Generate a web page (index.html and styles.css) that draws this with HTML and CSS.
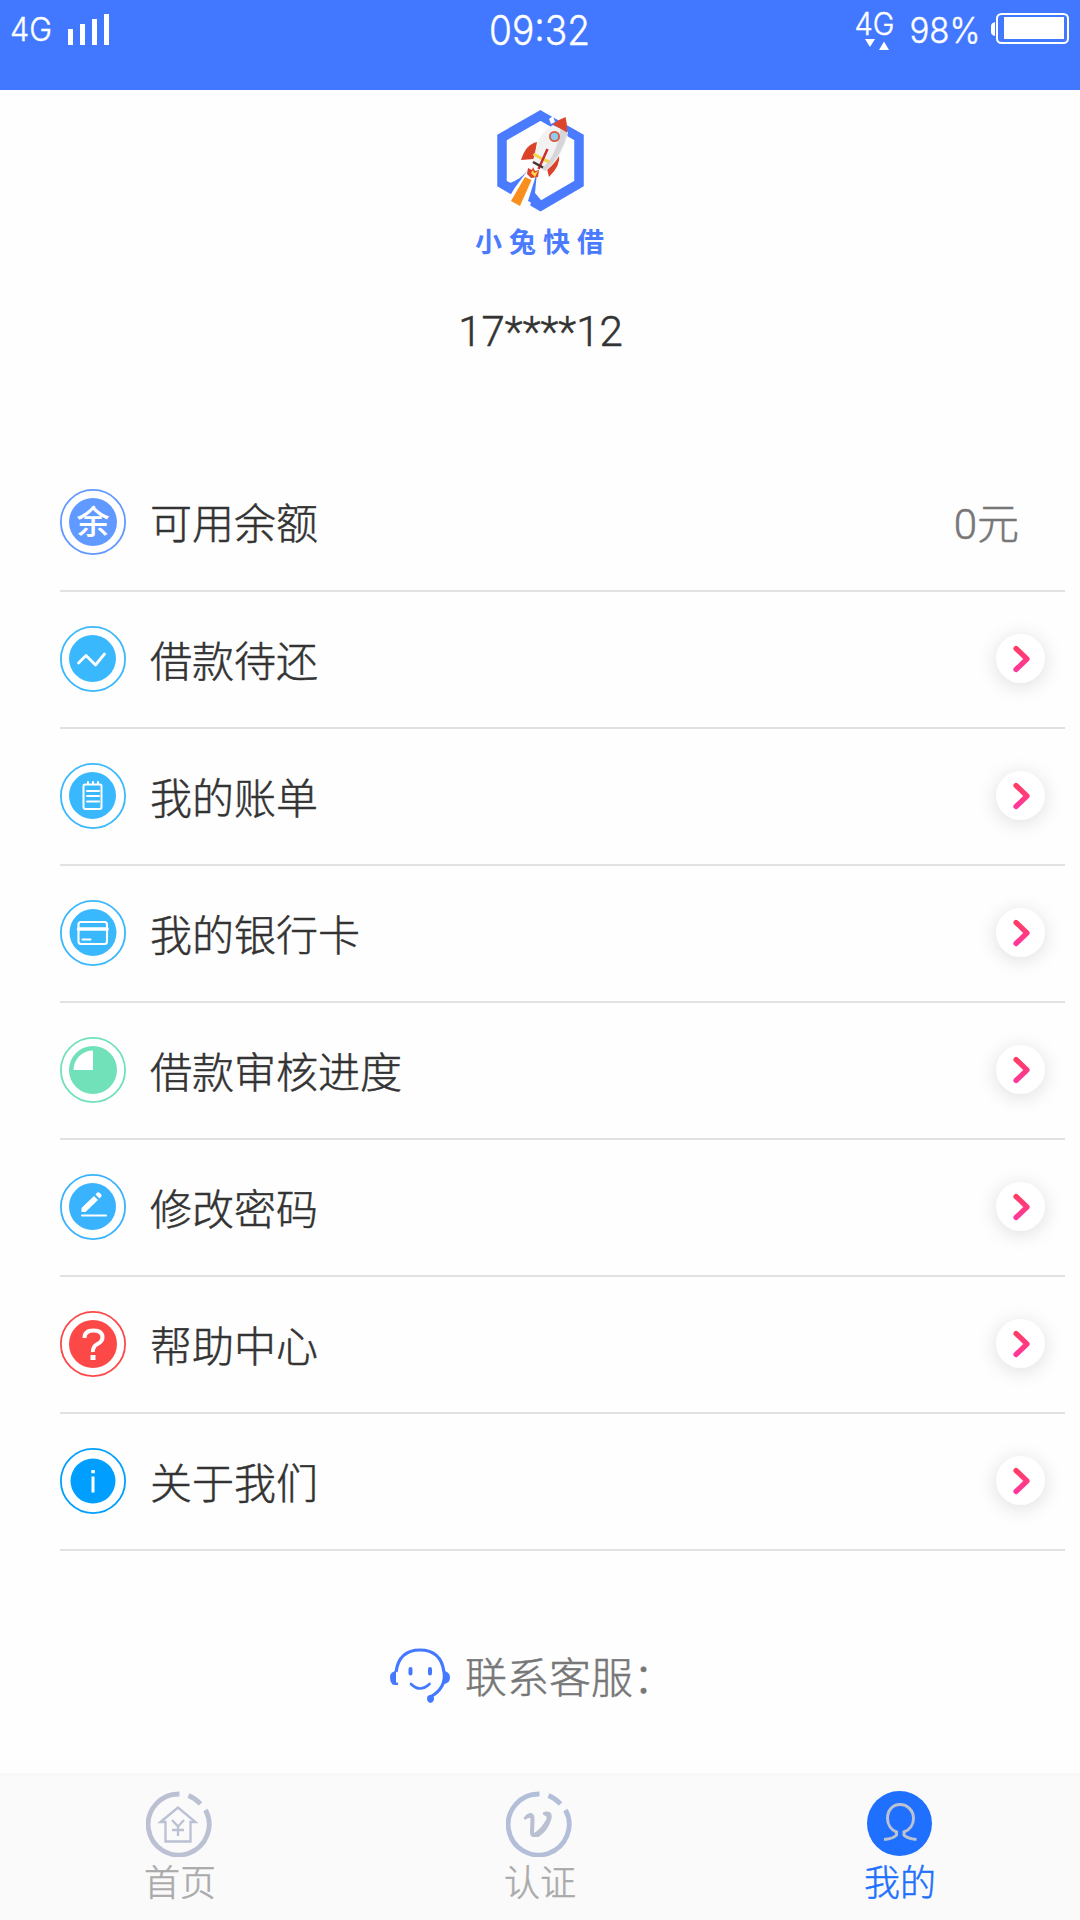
FILE: index.html
```html
<!DOCTYPE html>
<html lang="zh-CN">
<head>
<meta charset="utf-8">
<title>我的</title>
<link rel="stylesheet" href="styles.css">
</head>
<body>
<header class="status">
  <svg class="status-side" width="360" height="90" viewBox="0 0 360 90">
    <text x="10" y="40.5" font-size="33" textLength="42" lengthAdjust="spacingAndGlyphs">4G</text>
    <path d="M68 29h5v16h-5zM80 24h5v21h-5zM92 19h5v26h-5zM104 14h5v31h-5z"/>
  </svg>
  <svg class="status-side" width="360" height="90" viewBox="360 0 360 90">
    <text x="489" y="45" font-size="41" textLength="101" lengthAdjust="spacingAndGlyphs">09:32</text>
  </svg>
  <svg class="status-side" width="360" height="90" viewBox="720 0 360 90">
    <text x="854.500" y="34.500" font-size="31" textLength="40" lengthAdjust="spacingAndGlyphs">4G</text>
    <path d="M865 39h10l-5 8zM879 50h10l-5-8.500z"/>
    <text x="909.500" y="42.500" font-size="35" textLength="71" lengthAdjust="spacingAndGlyphs">98%</text>
    <path d="M995 22v14q-4-1-4-4v-6q0-3 4-4z"/>
    <rect x="997" y="14" width="71" height="29" rx="4.500" fill="none" stroke="#fff" stroke-width="2"/>
    <rect x="1004" y="17" width="60" height="22"/>
  </svg>
</header>

<section class="profile">
  <svg class="logo" width="88" height="102" viewBox="497 110 88 102">
    <path d="M540.500 115.500L579 137.500v46L540.500 206 502 183.500v-46z" fill="none" stroke="#4a7bff" stroke-width="9.500"/>
    <path d="M523 172l15 4-8 30-20-10z" fill="#fefefe"/>
    <path d="M505 181l5 2q11-4 18-13l-17 23-6-4zM537 172l-2 21 6 7v8l-13-7z" fill="#4a7bff"/>
    <path d="M549 119l4-3 2 6-4 2z" fill="#fefefe"/>
    <path d="M525 177l6.500 3-11.500 26-9-5z" fill="#f98f1d"/>
    <path d="M537 142q-11 2-16 18l13-1zM559 155q2 10-10 22l-3-12z" fill="#db4329"/>
    <path d="M553 125q-11 6-15 17l-6 22 14 7q12-10 16-21 5-9 6-18z" fill="#f2f2f3"/>
    <path d="M567.500 132q-5 23-22 39l-4-2q16-14 19-41z" fill="#d5d5da"/>
    <path d="M552.500 124.500q6-5 13-7.500 2 7 1.500 15.500-8-5-14.500-8z" fill="#dc4529"/>
    <circle cx="554.500" cy="136.500" r="4.600" fill="#8ecbef" stroke="#d9583e" stroke-width="1.800"/>
    <path d="M533.500 154q8 5 16 8" stroke="#f1d34e" stroke-width="3" fill="none"/>
    <path d="M547.500 149l-9 20" stroke="#ca302b" stroke-width="2.500"/>
    <path d="M533 162l10 5.500" stroke="#4b302e" stroke-width="2.500"/>
    <path d="M528 168l4 2 1-3 2 4 4-1-1 7-7 1-4-4z" fill="#d9422b"/>
    <path d="M531 173l2-3 1 3 4-2-3 6z" fill="#ffd84b"/>
  </svg>
  <div class="brand">小兔快借</div>
  <div class="phone">17****12</div>
</section>

<main class="menu">
  <div class="row">
    <svg class="icon" viewBox="0 0 66 66"><circle class="ring" cx="33" cy="33" r="32.100" stroke="#6099ff"/><circle cx="33" cy="33" r="24" fill="#6099ff"/><text class="glyph" x="33" y="45" text-anchor="middle">余</text></svg>
    <span class="label">可用余额</span><span class="amount">0元</span>
  </div>
  <div class="row">
    <svg class="icon" viewBox="0 0 66 66"><circle class="ring" cx="33" cy="33" r="32.100" stroke="#39b8fd"/><circle cx="32.500" cy="32.500" r="23.500" fill="#39b8fd"/><path class="line" d="M18.500 37l7.500-7.500 9.500 9.500 9-11" stroke-width="2.800"/></svg>
    <span class="label">借款待还</span><span class="go"><svg viewBox="0 0 49 49"><use href="#chev"/></svg></span>
  </div>
  <div class="row">
    <svg class="icon" viewBox="0 0 66 66"><circle class="ring" cx="33" cy="33" r="32.100" stroke="#39b8fd"/><circle cx="32.500" cy="32.500" r="23.500" fill="#39b8fd"/><path class="line" d="M25 21.500h15q1.500 0 1.500 1.500v21q0 2-2 2h-14q-2 0-2-2V23q0-1.500 1.500-1.500zM28 19v2M33 19v2M38 19v2M27 28h12M27 33h12M27 38.500h12" stroke-width="2"/></svg>
    <span class="label">我的账单</span><span class="go"><svg viewBox="0 0 49 49"><use href="#chev"/></svg></span>
  </div>
  <div class="row">
    <svg class="icon" viewBox="0 0 66 66"><circle class="ring" cx="33" cy="33" r="32.100" stroke="#39b8fd"/><circle cx="33" cy="32.500" r="23.500" fill="#39b8fd"/><rect class="line" x="18.500" y="22" width="28.500" height="22" rx="2.500" stroke-width="2.100"/><path class="line" d="M18.500 29h28.500" stroke-width="3.600"/><path class="line" d="M22.500 39.500h8" stroke-width="2"/></svg>
    <span class="label">我的银行卡</span><span class="go"><svg viewBox="0 0 49 49"><use href="#chev"/></svg></span>
  </div>
  <div class="row">
    <svg class="icon" viewBox="0 0 66 66"><circle class="ring" cx="33" cy="33" r="32.100" stroke="#70e1b9"/><circle cx="33" cy="33" r="24" fill="#70e1b9"/><path d="M33 33V13.500A19.500 19.500 0 0 0 13.500 33z" fill="#fff"/></svg>
    <span class="label">借款审核进度</span><span class="go"><svg viewBox="0 0 49 49"><use href="#chev"/></svg></span>
  </div>
  <div class="row">
    <svg class="icon" viewBox="0 0 66 66"><circle class="ring" cx="33" cy="33" r="32.100" stroke="#39b3fd"/><circle cx="32.500" cy="32.500" r="23.500" fill="#39b3fd"/><path d="M21.500 38v-4l12.500-12 4 4-12.500 12zM35.500 20.500l1.500-1.800q1.500-1 2.800.3l1.200 1.200q1.200 1.300.2 2.500L39.500 24.500z" fill="#fff"/><path class="line" d="M22 41.500h24" stroke-width="2"/></svg>
    <span class="label">修改密码</span><span class="go"><svg viewBox="0 0 49 49"><use href="#chev"/></svg></span>
  </div>
  <div class="row">
    <svg class="icon" viewBox="0 0 66 66"><circle class="ring" cx="33" cy="33" r="32.100" stroke="#fd4848"/><circle cx="33" cy="33" r="24" fill="#fd4848"/><path class="line butt" d="M24.500 27q0-7.500 9-7.500t9 7q0 4-5 6.500-5 2.500-4.500 8" stroke-width="4"/><rect x="30.500" y="44" width="5" height="5" fill="#fff"/></svg>
    <span class="label">帮助中心</span><span class="go"><svg viewBox="0 0 49 49"><use href="#chev"/></svg></span>
  </div>
  <div class="row">
    <svg class="icon" viewBox="0 0 66 66"><circle class="ring" cx="33" cy="33" r="32.100" stroke="#009fff"/><circle cx="33" cy="33" r="22.500" fill="#009fff"/><path d="M31.500 28.500h3v16h-3zM31.300 22h3.500v3.300h-3.500z" fill="#fff"/></svg>
    <span class="label">关于我们</span><span class="go"><svg viewBox="0 0 49 49"><use href="#chev"/></svg></span>
  </div>
</main>

<section class="contact">
  <svg width="60" height="56" viewBox="0 0 60 56">
    <path d="M6 24Q9 2 30 2t24 22c2 11-4 20-14 25" fill="none" stroke="#4478ff" stroke-width="3.200"/>
    <path d="M6 23v14q-6 0-6-8 0-5 6-6zM54 23v13q6-1 6-6.500T54 23zM37 51q0-4 3.500-4t3.500 3.500q0 3.500-3.500 4.500-3-.5-3.500-4z" fill="#4478ff"/>
    <path d="M2 35q3 .5 6 1" stroke="#4478ff" stroke-width="2.500"/>
    <path d="M21 36q9 9 18.500 0" fill="none" stroke="#4478ff" stroke-width="2.600" stroke-linecap="round"/>
    <path d="M20.500 21v4.500M40 21v4.500" stroke="#4478ff" stroke-width="4" stroke-linecap="round"/>
  </svg>
  <span>联系客服：</span>
</section>

<nav class="tabs">
  <a class="tab">
    <svg viewBox="0 0 66 66"><use href="#arc" stroke="#bbc1d3"/><path d="M14.500 31L32 16.500 49.500 31h-5v19.500h-25V31zM26 29l6 6.500 6-6.500M32 35.500V45M26 39h12" fill="none" stroke="#bbc1d3" stroke-width="2.300"/></svg>
    <span>首页</span>
  </a>
  <a class="tab">
    <svg viewBox="0 0 66 66"><use href="#arc" stroke="#b3bfd9"/><path d="M17.500 27q4-5.500 7.500-5 4 1 3.500 7l-.5 13q7-4 12.500-14 1-3-3-4-1.500-1.500 0-3 3-1 6 0 3 1.500 2 6.500-3 12-13 18.500h-6q-3-1-2.500-6l.5-12q.2-3-5.500 1z" fill="#b9c0d1"/></svg>
    <span>认证</span>
  </a>
  <a class="tab active">
    <svg viewBox="0 0 66 66"><circle cx="32.500" cy="32.500" r="32.500" fill="#2070ff"/><path d="M17 48.500q10-1 12.500-4.500v-3c-5-2-9-7-9-13.500C20.500 19 26 13.500 33 13.500S46.500 19 46.500 27.500c0 6.500-4 11.500-9.500 13.500v3q3 3.500 12.500 4.500" fill="none" stroke="#bcc2cf" stroke-width="3"/></svg>
    <span>我的</span>
  </a>
</nav>

<svg class="defs" width="0" height="0">
  <defs>
    <linearGradient id="pink" gradientUnits="userSpaceOnUse" x1="0" y1="13" x2="0" y2="38"><stop offset="0" stop-color="#ff3d62"/><stop offset="1" stop-color="#ff38a0"/></linearGradient>
    <path id="chev" d="M20 14.500l11 10.500-11 10.500" fill="none" stroke="url(#pink)" stroke-width="5.200" stroke-linecap="round" stroke-linejoin="round"/>
    <path id="arc" d="M33.500 3A30.500 30.500 0 1 0 59.500 19M42.500 4.500Q49.500 7.500 54.500 13" fill="none" stroke-width="4.800"/>
  </defs>
</svg>
</body>
</html>
```
FILE: styles.css
```css
* { box-sizing: border-box; }

body {
  margin: 0;
  width: 1080px;
  height: 1920px;
  display: flex;
  flex-direction: column;
  background: #fefefe;
  color: #333;
  font-family: Roboto, "Noto Sans CJK SC", sans-serif;
  font-weight: 300;
  font-size: 42px;
  line-height: 60px;
  -webkit-text-stroke: 0.5px currentColor;
}

svg { display: block; flex: none; -webkit-text-stroke: 0; }
.defs { position: absolute; }

.status {
  height: 90px;
  display: flex;
  background: #4178ff;
  font-family: Inter, sans-serif;
}
.status-side { fill: #fff; }
.status-side text { stroke: #fff; stroke-width: 0.4px; }

.profile {
  height: 363px;
  padding-top: 20px;
  display: flex;
  flex-direction: column;
  align-items: center;
}
.logo { margin-left: 1px; }
.brand {
  margin-top: 9px;
  padding-left: 6px;
  line-height: 40px;
  font-family: "Noto Sans CJK SC", sans-serif;
  font-size: 27px;
  font-weight: 700;
  letter-spacing: 7px;
  color: #4a7bff;
  -webkit-text-stroke: 0;
}
.phone { margin-top: 41px; padding-left: 1px; }

.menu { padding: 0 15px 0 60px; }
.row {
  height: 137px;
  padding-right: 20px;
  display: flex;
  align-items: center;
  border-bottom: 2px solid #e1e1e1;
}
.row:first-child { height: 139px; }
.row:first-child .icon { margin-top: 0; }
.icon { width: 66px; height: 66px; margin-top: -2px; }
.ring { fill: #fff; stroke-width: 1.8; }
.line { fill: none; stroke: #fff; stroke-linecap: round; stroke-linejoin: round; }
.butt { stroke-linecap: butt; }
.glyph { font-size: 33px; font-weight: 500; fill: #fff; }
.label { flex: 1; margin-left: 24px; padding-top: 6px; }
.amount { margin-right: 26px; padding-top: 7px; color: #777; }
.go {
  width: 49px;
  height: 49px;
  margin-top: -2px;
  border-radius: 50%;
  background: #fff;
  box-shadow: 0 3px 20px rgba(0, 0, 0, 0.13);
}

.contact {
  margin-top: 97px;
  height: 60px;
  padding-right: 15px;
  display: flex;
  justify-content: center;
  gap: 15px;
  color: #777;
}
.contact span { margin-top: 1px; }

.tabs {
  margin-top: auto;
  height: 147px;
  display: flex;
  background: #fafafa;
  border-top: 3px solid #f8f8f8;
  font-size: 36px;
  line-height: 52px;
  color: #aaa;
}
.tab {
  flex: 1;
  padding-top: 15px;
  display: flex;
  flex-direction: column;
  align-items: center;
}
.tab svg { width: 66px; height: 66px; margin-right: 2px; }
.tab span { margin-top: 1px; }
.active { color: #2070ff; }
.tab.active svg { margin-right: 1px; }
```
